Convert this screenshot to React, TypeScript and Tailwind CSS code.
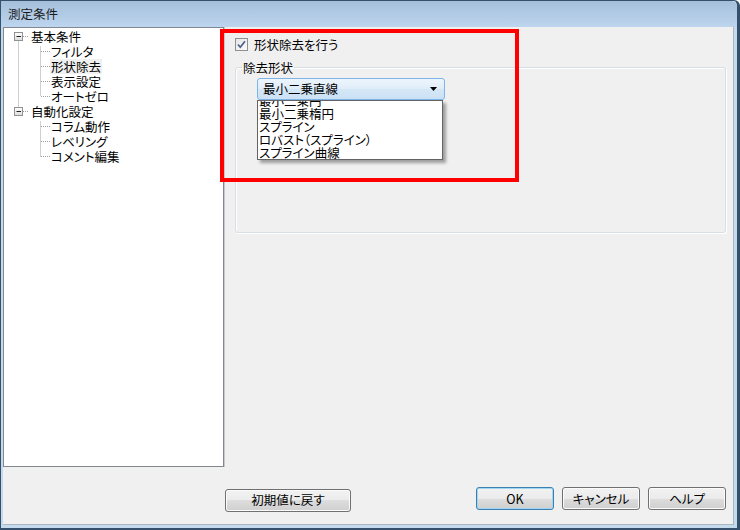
import React from 'react';

const FONT = "font-['Noto_Sans_CJK_JP',sans-serif] [font-feature-settings:'palt']";

const TREE = [
  { label: '基本条件', level: 0 },
  { label: 'フィルタ', level: 1 },
  { label: '形状除去', level: 1, selected: true },
  { label: '表示設定', level: 1 },
  { label: 'オートゼロ', level: 1 },
  { label: '自動化設定', level: 0 },
  { label: 'コラム動作', level: 1 },
  { label: 'レベリング', level: 1 },
  { label: 'コメント編集', level: 1 },
];

const LIST = ['最小二乗円', '最小二乗楕円', 'スプライン', 'ロバスト（スプライン）', 'スプライン曲線'];

// connector lines and expander boxes of the tree, in tree-inner coordinates
const TreeLines: React.FC = () => {
  const cy = (i: number) => 8.5 + 15 * i;
  const dot = { stroke: '#a0a0a0', strokeWidth: 1, strokeDasharray: '1 1' };
  const box = (i: number) => (
    <g key={'b' + i}>
      <rect x={10.5} y={cy(i) - 4} width={8} height={8} fill="url(#exp)" stroke="#919191" />
      <line x1={12.5} x2={17} y1={cy(i)} y2={cy(i)} stroke="#202020" />
      <line x1={19} x2={25} y1={cy(i)} y2={cy(i)} {...dot} />
    </g>
  );
  const kids = (from: number, to: number) => (
    <g key={'k' + from}>
      <line x1={36.5} x2={36.5} y1={cy(from - 1) + 10} y2={cy(to)} {...dot} />
      {Array.from({ length: to - from + 1 }, (_, k) => (
        <line key={k} x1={37} x2={46} y1={cy(from + k)} y2={cy(from + k)} {...dot} />
      ))}
    </g>
  );
  return (
    <svg className="absolute left-0 top-0" width={60} height={160}>
      <defs>
        <linearGradient id="exp" x1="0" y1="0" x2="0" y2="1">
          <stop offset="0" stopColor="#ffffff" />
          <stop offset="1" stopColor="#dcdcdc" />
        </linearGradient>
      </defs>
      <line x1={14.5} x2={14.5} y1={cy(0) + 5} y2={cy(5) - 5} {...dot} />
      {box(0)}
      {box(5)}
      {kids(1, 4)}
      {kids(6, 8)}
    </svg>
  );
};

const Button: React.FC<{ label: string; wide?: boolean; primary?: boolean }> = ({ label, wide, primary }) => (
  <button
    className={`h-[23px] ${wide ? 'w-[126px]' : 'w-[78px]'} rounded-[3px] border text-[12.5px] leading-none text-black ${
      primary
        ? 'border-[#3c7fb1] shadow-[inset_0_0_0_1px_#9fd6f2]'
        : 'border-[#707070] shadow-[inset_0_0_0_1px_#fbfbfb]'
    } bg-[linear-gradient(#f2f2f2_0%,#ebebeb_50%,#dddddd_50%,#cfcfcf_100%)]`}
  >
    {label}
  </button>
);

export default function App() {
  return (
    <div className={`relative w-[740px] h-[530px] overflow-hidden bg-white ${FONT}`}>
      {/* window frame */}
      <div className="w-[740px] h-[530px] flex flex-col rounded-tr-[6px] border border-r-[3px] border-b-[2px] border-[#34506c] bg-[#c6daee]">
        <div className="h-[26px] shrink-0 flex items-center pl-[7px] rounded-tr-[6px] bg-[linear-gradient(#a5bfdb,#bdd5ee)] text-[12.5px] text-[#1b1b1b]">
          測定条件
        </div>

        <div className="flex-1 ml-[2px] mr-[3px] mb-[3px] flex flex-col bg-[#f0f0f0] border-r border-b border-[#aab8c6]">
          <div className="h-[440px] flex">
            {/* tree */}
            <div className="relative w-[221px] shrink-0 border border-[#828790] bg-white pt-[1px]">
              <TreeLines />
              {TREE.map((t) => (
                <div
                  key={t.label}
                  className={`h-[15px] flex items-center text-[12.5px] leading-[15px] text-black ${t.level ? 'pl-[46px]' : 'pl-[26px]'}`}
                >
                  <span className={`px-[1px] ${t.selected ? 'bg-[#f0f0f0]' : ''}`}>{t.label}</span>
                </div>
              ))}
            </div>

            {/* settings pane */}
            <div className="flex-1 pt-[11px] pl-[10px] pr-[7px] border-l border-[#c8c8c8]">
              <div className="h-[13px] flex items-center gap-[6px]">
                <span className="w-[13px] h-[13px] border border-[#8e8f8f] bg-[linear-gradient(135deg,#e6e6e6,#fbfbfb)] flex items-center justify-center">
                  <svg width="11" height="11" viewBox="0 0 11 11">
                    <path d="M2 5.5 L4.3 8.2 L9 2.2" fill="none" stroke="#4b5f8a" strokeWidth="1.7" />
                  </svg>
                </span>
                <span className="text-[12.5px] leading-[13px] text-black">形状除去を行う</span>
              </div>

              <fieldset className="mt-[10px] rounded-[3px] border border-[#d5dfe5] shadow-[inset_1px_1px_0_#fff,1px_1px_0_#fff]">
                <legend className="ml-[6px] px-[1px] text-[12.5px] leading-[13px] text-black">除去形状</legend>
                <div className="h-[158px] pt-[4px] pl-[21px]">
                  <div className="relative w-[188px] h-[22px]">
                    <div className="h-full flex items-center justify-between pl-[5px] pr-[7px] rounded-[3px] border border-[#7eb4ea] bg-[linear-gradient(#edf5fc,#dfedf9_50%,#d4e7f6_50%,#cbe1f4)]">
                      <span className="text-[12.5px] leading-none text-black">最小二乗直線</span>
                      <svg width="7" height="4" viewBox="0 0 7 4">
                        <path d="M0 0 H7 L3.5 4 Z" fill="#000" />
                      </svg>
                    </div>
                    {/* open drop-down list */}
                    <div className="absolute left-0 top-full w-[186px] h-[60px] overflow-hidden border border-[#646464] bg-white pl-[1px] shadow-[3px_3px_3px_rgba(0,0,0,0.35)]">
                      <div className="-mt-[7px]">
                        {LIST.map((item) => (
                          <div key={item} className="h-[13px] text-[12.5px] leading-[13px] text-black whitespace-nowrap">
                            {item}
                          </div>
                        ))}
                      </div>
                    </div>
                  </div>
                </div>
              </fieldset>
            </div>
          </div>

          <div className="mt-[19px] flex items-center pr-[7px]">
            <div className="ml-[222px]">
              <Button label="初期値に戻す" wide />
            </div>
            <div className="ml-auto flex gap-[8px]">
              <Button label="OK" primary />
              <Button label="キャンセル" />
              <Button label="ヘルプ" />
            </div>
          </div>
        </div>
      </div>

      {/* red annotation */}
      <div className="absolute left-[220px] top-[29px] w-[299px] h-[153px] border-4 border-[#ff0000]" />
    </div>
  );
}
